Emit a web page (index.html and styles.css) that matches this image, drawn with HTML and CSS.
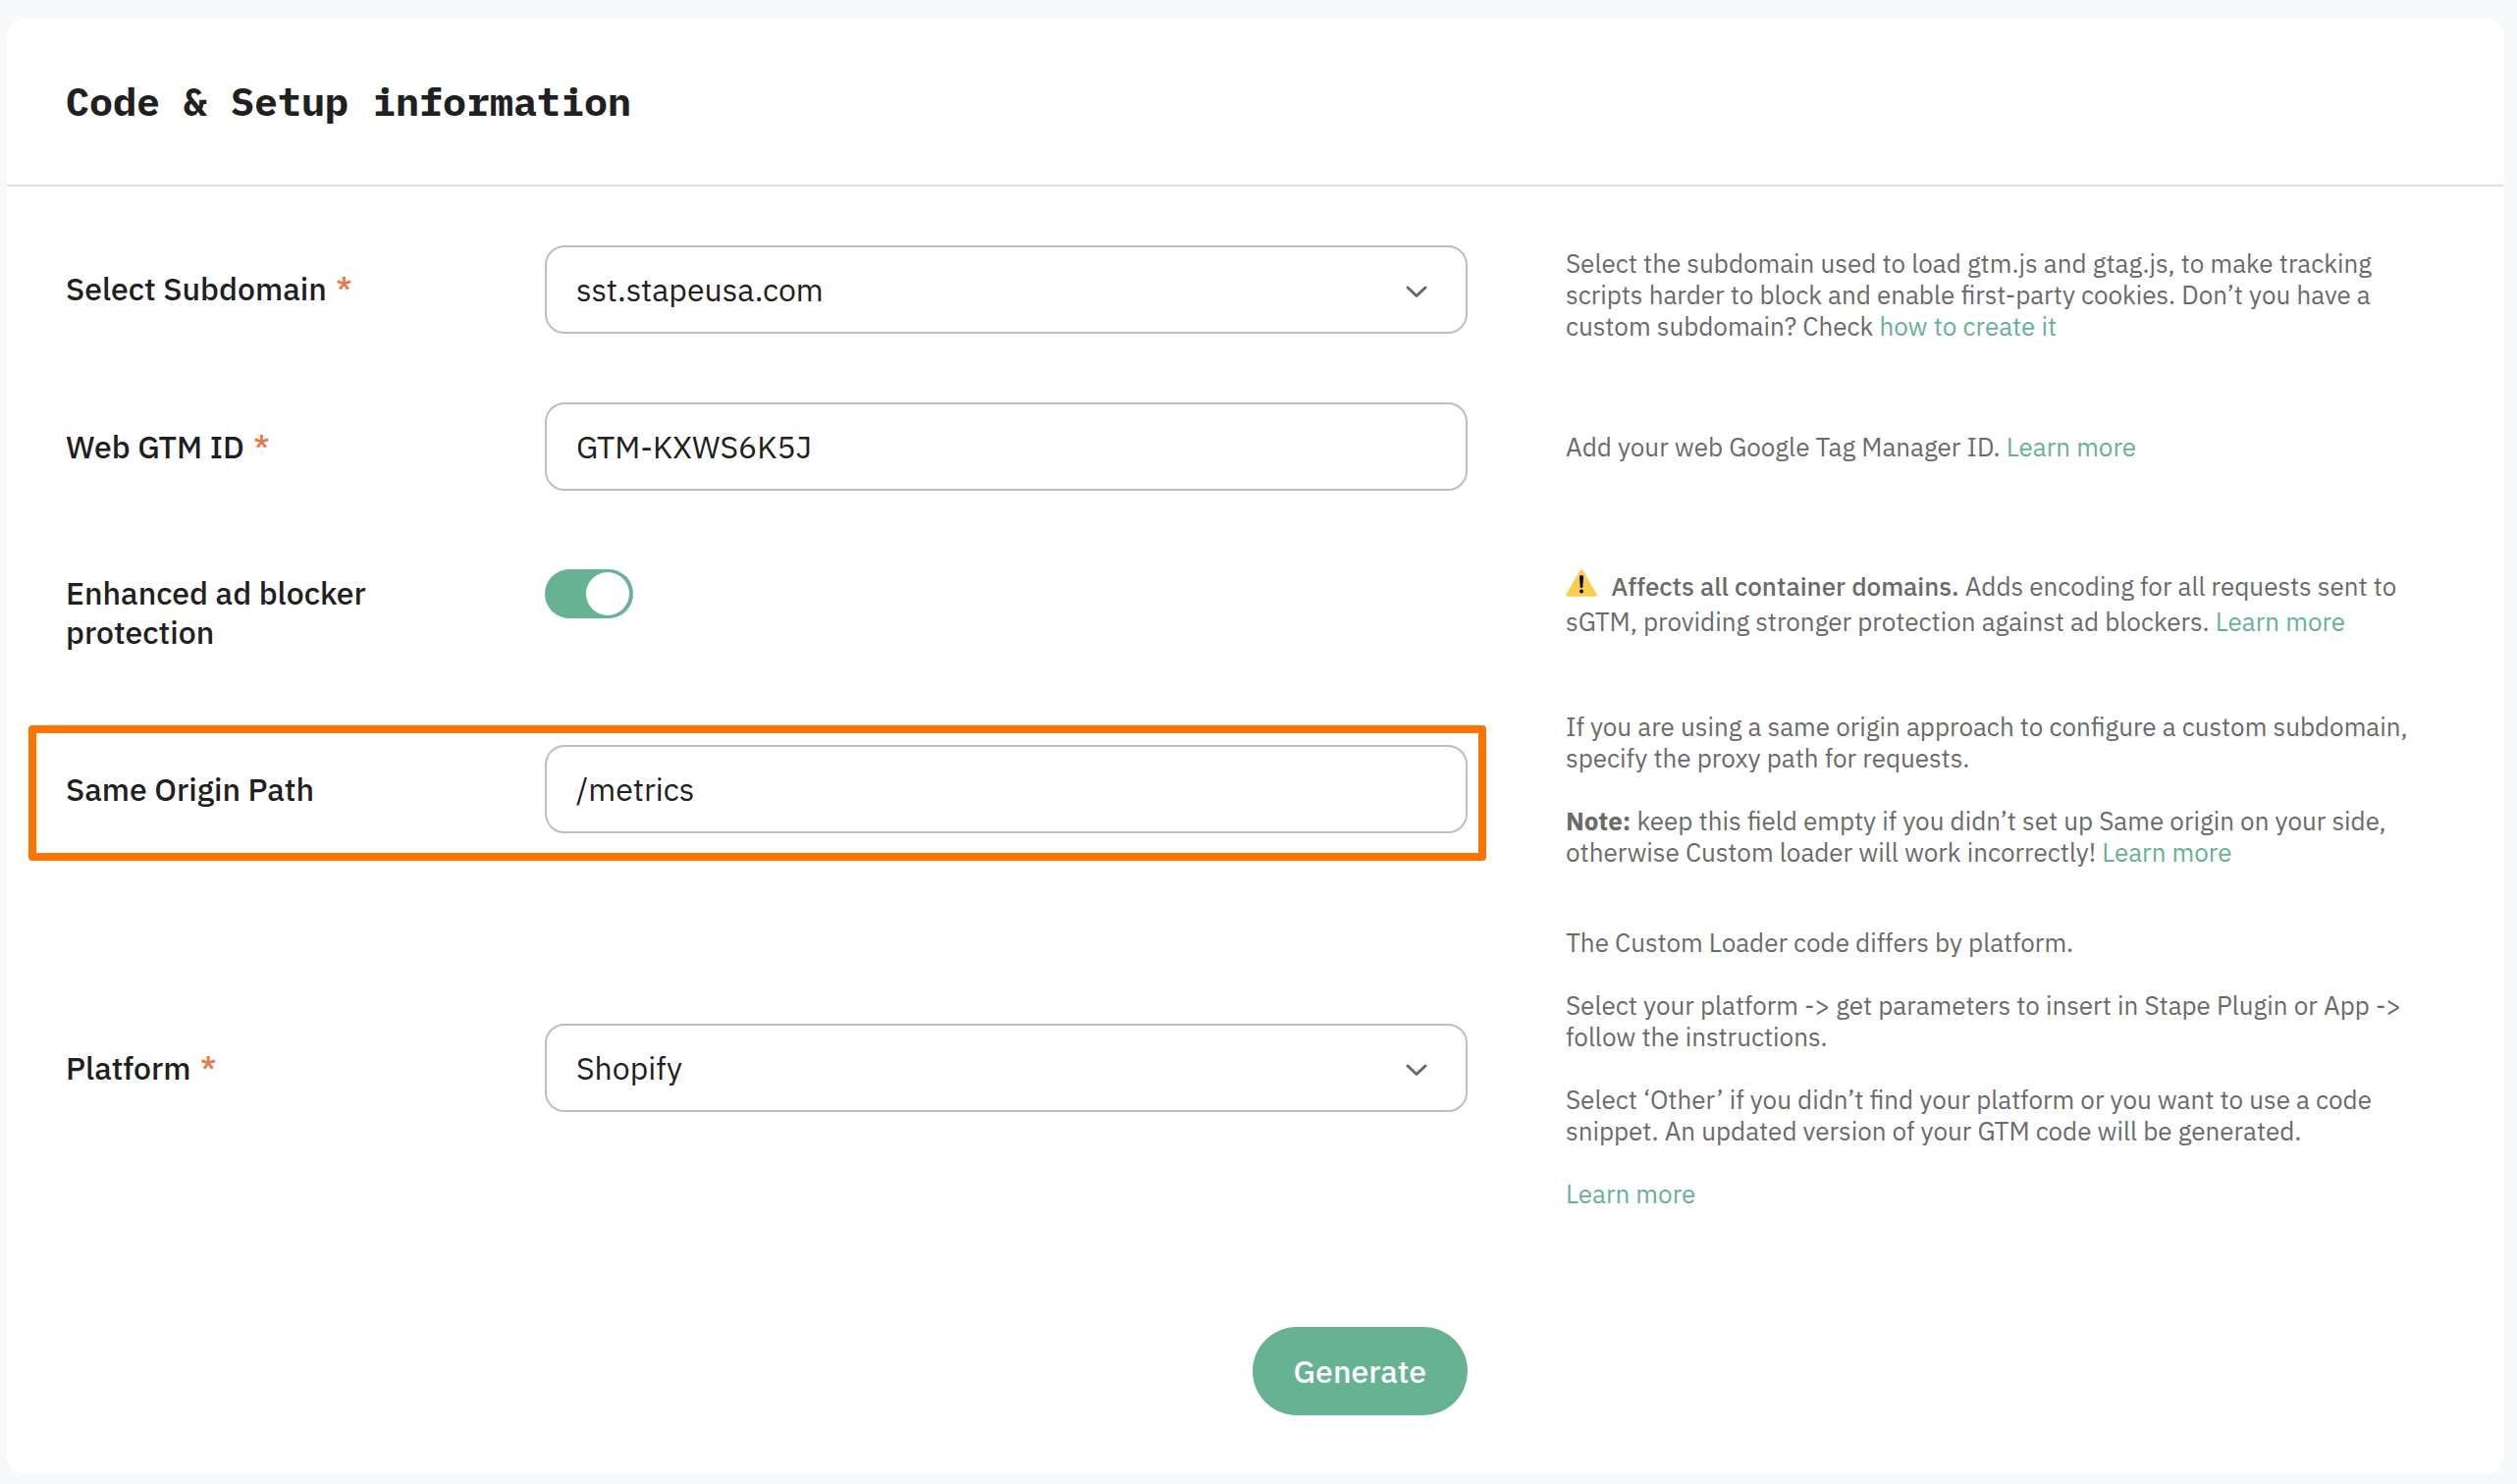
FILE: index.html
```html
<!DOCTYPE html>
<html lang="en">

<head>
    <meta charset="UTF-8">
    <meta name="viewport" content="width=device-width, initial-scale=1.0">
    <title>Code &amp; Setup information</title>
    <link rel="stylesheet" href="styles.css">
</head>

<body>

    <main class="card">
        <header class="card-header">
            <h1>Code &amp; Setup information</h1>
        </header>

        <form class="setup-form">
            <!-- Subdomain -->
            <div class="form-row row-top">
                <label class="form-label" for="subdomain">Select Subdomain <span class="required">*</span></label>
                <div class="select-box">
                    <select class="field" id="subdomain">
                        <option>sst.stapeusa.com</option>
                    </select>
                    <svg class="chevron" viewBox="0 0 24 14" aria-hidden="true">
                        <path d="M3 3l9 8.500 9-8.500" />
                    </svg>
                </div>
                <div class="help">
                    <p>Select the subdomain used to load gtm.js and gtag.js, to make tracking<br>scripts harder to block and enable first-party cookies. Don’t you have a<br>custom subdomain? Check <a href="#">how to create it</a></p>
                </div>
            </div>

            <!-- GTM ID -->
            <div class="form-row">
                <label class="form-label" for="gtm-id">Web GTM ID <span class="required">*</span></label>
                <input class="field" type="text" id="gtm-id" value="GTM-KXWS6K5J">
                <div class="help">
                    <p>Add your web Google Tag Manager ID. <a href="#">Learn more</a></p>
                </div>
            </div>

            <!-- Ad blocker protection -->
            <div class="form-row row-top">
                <label class="form-label" for="protection">Enhanced ad blocker<br>protection</label>
                <input class="toggle" type="checkbox" role="switch" id="protection" checked>
                <div class="help help-warning">
                    <p>
                        <svg class="warning-icon" viewBox="0 0 32 28" aria-hidden="true">
                            <path class="warning-shape" d="M14.600 1Q16-.7 17.400 1L31.400 25.200Q32.200 27.600 30 27.800H2Q-.2 27.600.6 25.200Z" />
                            <path d="M14 7.500Q14 6 16 6T18 7.500L17.300 18Q17.200 19 16 19T14.700 18Z" />
                            <circle cx="16" cy="22.600" r="2" />
                        </svg>
                        <strong>Affects all container domains.</strong> Adds encoding for all requests sent to<br>sGTM, providing stronger protection against ad blockers. <a href="#">Learn more</a>
                    </p>
                </div>
            </div>

            <!-- Same origin path -->
            <div class="form-row">
                <label class="form-label" for="origin-path">Same Origin Path</label>
                <input class="field" type="text" id="origin-path" value="/metrics">
                <div class="help">
                    <p>If you are using a same origin approach to configure a custom subdomain,<br>specify the proxy path for requests.</p>
                    <p><b>Note:</b> keep this field empty if you didn’t set up Same origin on your side,<br>otherwise Custom loader will work incorrectly! <a href="#">Learn more</a></p>
                </div>
                <div class="highlight"></div>
            </div>

            <!-- Platform -->
            <div class="form-row">
                <label class="form-label" for="platform">Platform <span class="required">*</span></label>
                <div class="select-box">
                    <select class="field" id="platform">
                        <option>Shopify</option>
                    </select>
                    <svg class="chevron" viewBox="0 0 24 14" aria-hidden="true">
                        <path d="M3 3l9 8.500 9-8.500" />
                    </svg>
                </div>
                <div class="help">
                    <p>The Custom Loader code differs by platform.</p>
                    <p>Select your platform -&gt; get parameters to insert in Stape Plugin or App -&gt;<br>follow the instructions.</p>
                    <p>Select ‘Other’ if you didn’t find your platform or you want to use a code<br>snippet. An updated version of your GTM code will be generated.</p>
                    <p><a href="#">Learn more</a></p>
                </div>
            </div>

            <div class="form-row form-actions">
                <button class="generate-btn" type="button">Generate</button>
            </div>
        </form>
    </main>

</body>

</html>
```

FILE: styles.css
```css
* {
    box-sizing: border-box;
}

body {
    margin: 0;
    padding: 18px 13px 10px 7px;
    background-color: #f8f9fb;
    color: #1f2021;
    font-family: "IBM Plex Sans", Roboto, sans-serif;
}

/* Card */
.card {
    background-color: #fff;
    border-radius: 20px;
}

.card-header {
    padding: 60px;
    border-bottom: 2px solid #e2e3e9;
}

.card-header h1 {
    margin: 0;
    font-family: "IBM Plex Mono", "Liberation Mono", monospace;
    font-size: 40px;
    line-height: 50px;
    font-weight: bold;
}

/* Form */
.setup-form {
    display: flex;
    flex-direction: column;
    gap: 60px;
    padding: 60px;
}

.form-row {
    display: grid;
    grid-template-columns: 388fr 940fr 896fr;
    column-gap: 100px;
    align-items: center;
    position: relative;
}

.form-label {
    font-size: 32px;
    line-height: 40px;
    font-weight: 500;
}

.required {
    margin-left: 2px;
    color: #ee7645;
}

.field {
    display: block;
    width: 100%;
    height: 90px;
    padding: 0 30px;
    border: 2px solid #b9c0c8;
    border-radius: 20px;
    background-color: #fff;
    color: #1f2021;
    font-family: inherit;
    font-size: 32px;
    appearance: none;
}

.select-box {
    position: relative;
}

.chevron {
    position: absolute;
    top: 40px;
    right: 40px;
    width: 24px;
    height: 14px;
    fill: none;
    stroke: #65686d;
    stroke-width: 3;
    stroke-linecap: round;
    stroke-linejoin: round;
    pointer-events: none;
}

/* Toggle */
.toggle {
    display: flex;
    justify-content: flex-end;
    width: 90px;
    height: 50px;
    margin: 0;
    padding: 3px 4px;
    border-radius: 25px;
    background-color: #67b292;
    appearance: none;
}

.toggle::before {
    content: "";
    width: 44px;
    height: 44px;
    border-radius: 50%;
    background-color: #fff;
}

.toggle:not(:checked) {
    justify-content: flex-start;
    background-color: #b9c0c8;
}

/* Help texts */
.help {
    color: #6a6a6a;
    font-size: 26px;
    line-height: 32px;
}

.help p {
    margin: 0;
}

.help p + p {
    margin-top: 32px;
}

.help a {
    color: #67b292;
    text-decoration: none;
}

.help strong {
    font-weight: 500;
}

.warning-icon {
    width: 32px;
    height: 28px;
    margin-right: 8px;
    vertical-align: -1px;
}

.warning-shape {
    fill: #fbce4b;
}

/* Rows aligned on the first line */
.row-top {
    align-items: start;
}

.row-top .form-label {
    padding-top: 24px;
}

.row-top .toggle {
    margin-top: 20px;
}

.row-top .help {
    padding: 2px 0;
}

.row-top .help-warning {
    padding-top: 19px;
    line-height: 36px;
}

.highlight {
    position: absolute;
    grid-column: 1 / 3;
    inset: 15px -19px 7px -38px;
    border: 8px solid #ff7300;
    border-radius: 4px;
    pointer-events: none;
}

/* Button */
.form-actions {
    padding-top: 60px;
}

.generate-btn {
    grid-column: 2;
    justify-self: end;
    height: 90px;
    padding: 0 42px;
    border: none;
    border-radius: 45px;
    background-color: #67b292;
    color: #fff;
    font-family: inherit;
    font-size: 32px;
    font-weight: 500;
}
```
